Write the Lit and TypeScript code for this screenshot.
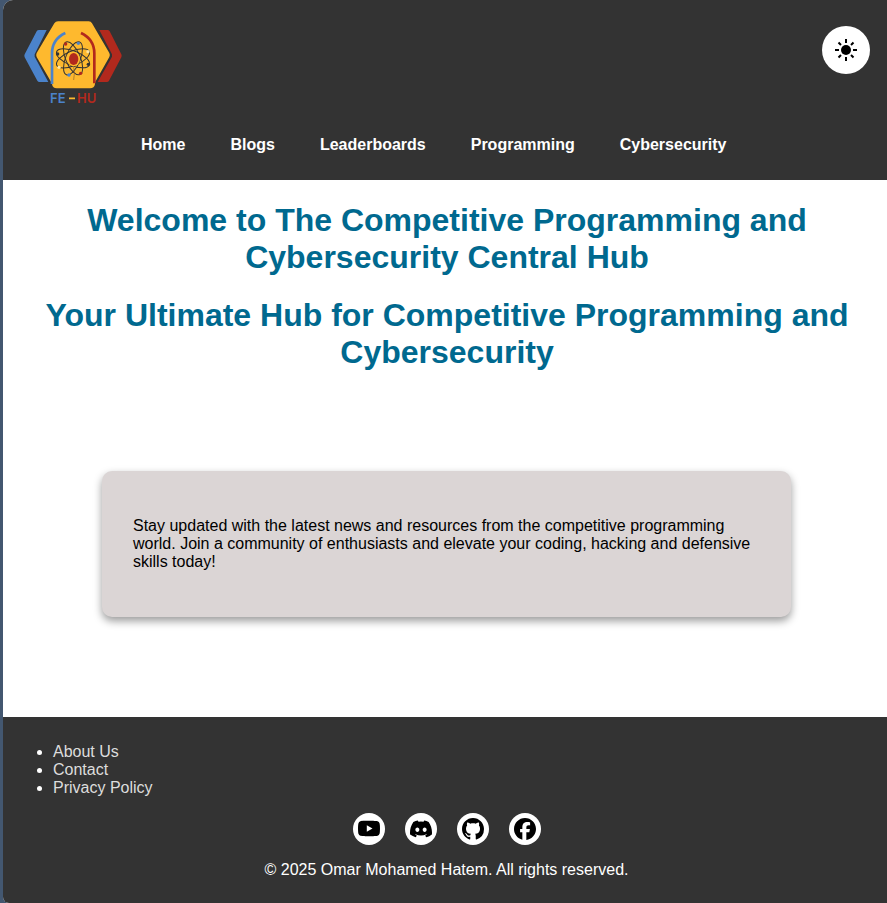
import { LitElement, html, css, svg } from "lit";
import { customElement } from "lit/decorators.js";

const navItems = ["Home", "Blogs", "Leaderboards", "Programming", "Cybersecurity"];
const footerItems = ["About Us", "Contact", "Privacy Policy"];

const socials = [
  {
    name: "YouTube",
    box: "0 0 16 16",
    path: "M8.051 1.999h.089c.822.003 4.987.033 6.11.335a2.01 2.01 0 0 1 1.415 1.42c.101.38.172.883.22 1.402l.01.104.022.26.008.104c.065.914.073 1.77.074 1.957v.075c-.001.194-.01 1.108-.082 2.06l-.008.105-.009.104c-.05.572-.124 1.14-.235 1.558a2.01 2.01 0 0 1-1.415 1.42c-1.16.312-5.569.334-6.18.335h-.142c-.309 0-1.587-.006-2.927-.052l-.17-.006-.087-.004-.171-.007-.171-.007c-1.11-.049-2.167-.128-2.654-.26a2.01 2.01 0 0 1-1.415-1.419c-.111-.417-.185-.986-.235-1.558L.09 9.82l-.008-.104A31 31 0 0 1 0 7.68v-.123c.002-.215.01-.958.064-1.778l.007-.103.003-.052.008-.104.022-.26.01-.104c.048-.519.119-1.023.22-1.402a2.01 2.01 0 0 1 1.415-1.42c.487-.13 1.544-.21 2.654-.26l.17-.007.172-.006.086-.003.171-.007A100 100 0 0 1 7.858 2zM6.4 5.209v4.818l4.157-2.408z",
  },
  {
    name: "Discord",
    box: "0 0 16 16",
    path: "M13.545 2.907a13.2 13.2 0 0 0-3.257-1.011.05.05 0 0 0-.052.025c-.141.25-.297.577-.406.833a12.2 12.2 0 0 0-3.658 0 8 8 0 0 0-.412-.833.05.05 0 0 0-.052-.025c-1.125.194-2.22.534-3.257 1.011a.04.04 0 0 0-.021.018C.356 6.024-.213 9.047.066 12.032q.003.022.021.037a13.3 13.3 0 0 0 3.995 2.02.05.05 0 0 0 .056-.019q.463-.63.818-1.329a.05.05 0 0 0-.01-.059l-.018-.011a9 9 0 0 1-1.248-.595.05.05 0 0 1-.02-.066l.015-.019q.127-.095.248-.195a.05.05 0 0 1 .051-.007c2.619 1.196 5.454 1.196 8.041 0a.05.05 0 0 1 .053.007q.121.1.248.195a.05.05 0 0 1-.004.085 8 8 0 0 1-1.249.594.05.05 0 0 0-.03.03.05.05 0 0 0 .003.041c.24.465.515.909.817 1.329a.05.05 0 0 0 .056.019 13.2 13.2 0 0 0 4.001-2.02.05.05 0 0 0 .021-.037c.334-3.451-.559-6.449-2.366-9.106a.03.03 0 0 0-.02-.019m-8.198 7.307c-.789 0-1.438-.724-1.438-1.612s.637-1.613 1.438-1.613c.807 0 1.45.73 1.438 1.613 0 .888-.637 1.612-1.438 1.612m5.316 0c-.788 0-1.438-.724-1.438-1.612s.637-1.613 1.438-1.613c.807 0 1.451.73 1.438 1.613 0 .888-.631 1.612-1.438 1.612",
  },
  {
    name: "GitHub",
    box: "0 0 16 16",
    path: "M8 0C3.58 0 0 3.58 0 8c0 3.54 2.29 6.53 5.47 7.59.4.07.55-.17.55-.38 0-.19-.01-.82-.01-1.49-2.01.37-2.53-.49-2.69-.94-.09-.23-.48-.94-.82-1.13-.28-.15-.68-.52-.01-.53.63-.01 1.08.58 1.23.82.72 1.21 1.87.87 2.33.66.07-.52.28-.87.51-1.07-1.78-.2-3.64-.89-3.64-3.95 0-.87.31-1.59.82-2.15-.08-.2-.36-1.02.08-2.12 0 0 .67-.21 2.2.82.64-.18 1.32-.27 2-.27s1.36.09 2 .27c1.53-1.04 2.2-.82 2.2-.82.44 1.1.16 1.92.08 2.12.51.56.82 1.27.82 2.15 0 3.07-1.87 3.75-3.65 3.95.29.25.54.73.54 1.48 0 1.07-.01 1.93-.01 2.2 0 .21.15.46.55.38A8.01 8.01 0 0 0 16 8c0-4.42-3.58-8-8-8",
  },
  {
    name: "Facebook",
    box: "0 0 512 512",
    path: "M512 256C512 114.6 397.4 0 256 0S0 114.6 0 256C0 376 82.7 476.8 194.2 504.5V334.2H141.4V256h52.8V222.3c0-87.1 39.4-127.5 125-127.5c16.2 0 44.2 3.2 55.7 6.4V172c-6-.6-16.5-1-29.6-1c-42 0-58.2 15.9-58.2 57.2V256h83.6l-14.4 78.2H287V510.1C413.8 494.8 512 386.9 512 256z",
  },
];

@customElement("app-root")
export class AppRoot extends LitElement {
  static styles = css`
    :host {
      display: block;
      box-sizing: border-box;
      min-height: 100vh;
      padding-left: 3px;
      background: #435770;
      font: 16px/18px "Liberation Sans", Arial, sans-serif;
    }
    .page {
      display: flex;
      flex-direction: column;
      min-height: 100vh;
      border-radius: 10px 0 0 6px;
      overflow: hidden;
      background: #fff;
    }
    header {
      padding: 21px 17px 26px 20px;
      background: #333;
    }
    .bar {
      display: flex;
      justify-content: space-between;
      align-items: flex-start;
    }
    .logo,
    .logo svg {
      display: block;
    }
    .logo text {
      font: 600 13px "Inter", sans-serif;
    }
    .theme {
      display: grid;
      place-items: center;
      width: 48px;
      height: 48px;
      margin: 5px 0 0;
      padding: 0;
      border: 0;
      border-radius: 50%;
      background: #fff;
      color: #000;
    }
    nav {
      display: flex;
      flex-wrap: wrap;
      gap: 18px 45px;
      margin: 31px 0 0 118px;
    }
    nav a {
      color: #fff;
      font-weight: bold;
      text-decoration: none;
    }
    main {
      flex: 1;
      padding: 22px 0 100px 4px;
    }
    h1 {
      margin: 0 0 21px;
      padding: 0 20px;
      color: #00698f;
      font-size: 32px;
      line-height: 37px;
      text-align: center;
    }
    .card {
      margin: 100px 96px 0 95px;
      padding: 46px 31px;
      border-radius: 10px;
      background: #dbd5d5;
      box-shadow: 0 4px 8px rgba(0, 0, 0, 0.4);
    }
    .card p {
      margin: 0;
    }
    footer {
      padding: 26px 0 24px 3px;
      background: #333;
      color: #fff;
    }
    footer ul {
      margin: 0;
      padding-left: 47px;
    }
    footer li a {
      color: #ddd;
      text-decoration: none;
    }
    .socials {
      display: flex;
      justify-content: center;
      gap: 20px;
      margin: 16px 0;
    }
    .socials a {
      display: grid;
      place-items: center;
      width: 32px;
      height: 32px;
      border-radius: 50%;
      background: #fff;
      color: #000;
    }
    .copy {
      margin: 0;
      text-align: center;
    }
  `;

  private logo() {
    return html`<svg width="100" height="84" viewBox="69 63 300 252" role="img" aria-label="FE-HU">
      <path d="M140 90H117Q112 90 110 94L74 163Q72 168 74 172L112 242Q114 246 119 246H145L104 170V163Z" fill="#4b83cb" />
      <path d="M298 90H322Q327 90 329 94L364 163Q366 168 364 172L327 242Q325 246 320 246H293L336 170V163Z" fill="#b2291d" />
      <path d="M174 64H266Q273 64 276 70L328 159Q331 165 328 171L286 245Q285 248 285 252Q283 265 270 265H170Q158 265 156 252L153 245L110 171Q107 165 110 159L163 70Q167 64 174 64Z" fill="#feb92e" />
      <g fill="none" stroke-width="8">
        <path d="M156 252V160Q156 118 196 99" stroke="#4b83cb" />
        <path d="M283 250V160Q283 118 243 99" stroke="#b2291d" />
      </g>
      <g fill="none" stroke="#333" stroke-width="3">
        ${[22, 67, 112, 157].map(
          (angle) => svg`<ellipse cx="219" cy="175" rx="53" ry="22" transform="rotate(${angle} 219 175)" />`
        )}
        <path d="M220 194Q226 220 221 240" stroke-width="2" stroke="#8a642c" />
      </g>
      <ellipse cx="221" cy="177" rx="19" ry="22" fill="#feb92e" />
      <ellipse cx="221" cy="177" rx="14" ry="18" fill="#b2291d" />
      <g fill="#b2291d"><circle cx="197" cy="132" r="5" /><circle cx="242" cy="220" r="5" /></g>
      <g fill="#4b83cb"><circle cx="235" cy="130" r="5" /><circle cx="207" cy="225" r="5" /></g>
      <g fill="#333"><circle cx="173" cy="162" r="5" /><circle cx="265" cy="193" r="5" /></g>
      <g fill="#ffe5a0"><circle cx="264" cy="155" r="5" /><circle cx="177" cy="202" r="5" /></g>
      <g transform="translate(0 309) scale(3)">
        <text x="50" y="0" fill="#4b83cb">FE</text>
        <text x="77" y="0" fill="#b2291d">HU</text>
      </g>
      <path d="M207 295H225" stroke="#feb92e" stroke-width="5" />
    </svg>`;
  }

  render() {
    return html`
      <div class="page">
        <header>
          <div class="bar">
            <a class="logo" href="#">${this.logo()}</a>
            <button class="theme" aria-label="Switch theme">
              <svg width="24" height="24" viewBox="0 0 24 24" fill="currentColor">
                <circle cx="12" cy="12" r="5" />
                <path
                  d="M12 1v4M12 19v4M1 12h4M19 12h4M4.5 4.5l2.5 2.5M17 17l2.5 2.5M4.5 19.5l2.5-2.5M17 7l2.5-2.5"
                  stroke="currentColor"
                  stroke-width="2"
                />
              </svg>
            </button>
          </div>
          <nav>${navItems.map((item) => html`<a href="#">${item}</a>`)}</nav>
        </header>
        <main>
          <h1>Welcome to The Competitive Programming and Cybersecurity Central Hub</h1>
          <h1>Your Ultimate Hub for Competitive Programming and Cybersecurity</h1>
          <section class="card">
            <p>
              Stay updated with the latest news and resources from the competitive programming world. Join a
              community of enthusiasts and elevate your coding, hacking and defensive skills today!
            </p>
          </section>
        </main>
        <footer>
          <ul>
            ${footerItems.map((item) => html`<li><a href="#">${item}</a></li>`)}
          </ul>
          <div class="socials">
            ${socials.map(
              (s) => html`<a href="#" aria-label=${s.name}>
                <svg width="22" height="22" viewBox=${s.box} fill="currentColor"><path d=${s.path} /></svg>
              </a>`
            )}
          </div>
          <p class="copy">© 2025 Omar Mohamed Hatem. All rights reserved.</p>
        </footer>
      </div>
    `;
  }
}
